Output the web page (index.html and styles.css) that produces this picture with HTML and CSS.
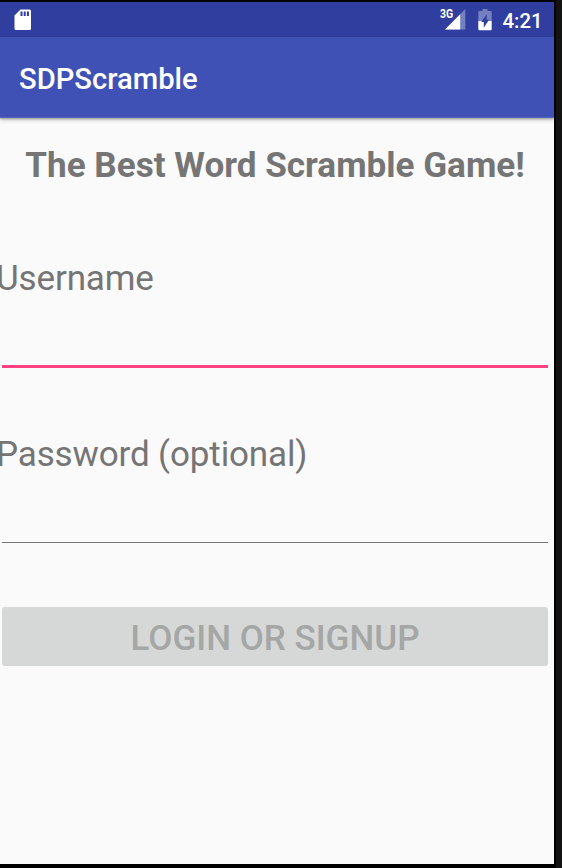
FILE: index.html
```
<!DOCTYPE html>
<html lang="en">
<head>
<meta charset="utf-8">
<title>SDPScramble</title>
<link rel="stylesheet" href="styles.css">
</head>
<body>
<main class="screen">
  <div class="status-bar">
    <svg class="sd-icon" viewBox="0 0 18 22" aria-hidden="true">
      <path fill="#fff" d="M6.5 0.5H15.5Q17 0.5 17 2V19.5Q17 21 15.5 21H2Q0.5 21 0.5 19.5V6.5Z"/>
      <path fill="#303f9f" d="M6.5 2.5h2v4.5h-2zM9.7 2.5h2v4.5h-2zM12.9 2.5h2v4.5h-2z"/>
    </svg>
    <div class="signal">
      <span class="network">3G</span>
      <svg class="signal-icon" viewBox="0 0 21 21" aria-hidden="true">
        <path fill="#7580c0" d="M20.3 0V20.6H0Z"/>
        <path fill="#fff" d="M15.2 5.2V20.6H0Z"/>
      </svg>
    </div>
    <svg class="battery-icon" viewBox="0 0 14 22" aria-hidden="true">
      <path fill="#7580c0" d="M4.5 0h5v2h3.2q1 0 1 1V12H0.3V3q0-1 1-1h3.2z"/>
      <path fill="#fff" d="M0.3 12H13.7V20.2q0 1-1 1H1.3q-1 0-1-1z"/>
      <path fill="#303f9f" d="M8.7 5.2V10.8H11L5.8 18.8V13H3.2Z"/>
    </svg>
    <span class="clock">4:21</span>
  </div>
  <header class="app-bar"><h1>SDPScramble</h1></header>
  <form class="content">
    <h2>The Best Word Scramble Game!</h2>
    <label class="field">
      <span class="label">Username</span>
      <input class="focused" type="text">
    </label>
    <label class="field">
      <span class="label">Password (optional)</span>
      <input type="password">
    </label>
    <button type="button" disabled>LOGIN OR SIGNUP</button>
  </form>
</main>
</body>
</html>
```

FILE: styles.css
```
* {
  box-sizing: border-box;
}

body {
  margin: 0;
  height: 868px;
  overflow: hidden;
  padding: 2px 8px 4px 0;
  background: linear-gradient(90deg, #000 556px, #131313 556px);
  font-family: Roboto, sans-serif;
}

.screen {
  width: 554px;
  height: 862px;
  overflow: hidden;
  background: #fafafa;
}

.status-bar {
  display: flex;
  height: 35px;
  padding: 7px 12px 0 13.5px;
  background: #303f9f;
  color: #fff;
}

.sd-icon {
  width: 18px;
  height: 22px;
}

.signal {
  display: flex;
  margin-left: auto;
}

.network {
  margin-right: -8px;
  font-size: 12px;
  font-weight: 700;
  line-height: 11px;
  transform: scaleX(.87);
  transform-origin: right;
  z-index: 1;
}

.signal-icon {
  width: 21px;
  height: 21px;
}

.battery-icon {
  width: 14px;
  height: 22px;
  margin-left: 12px;
}

.clock {
  margin-left: 10px;
  margin-right: -0.6px;
  font-size: 20.4px;
  font-weight: 500;
  line-height: 24px;
}

.app-bar {
  display: flex;
  align-items: center;
  height: 81px;
  padding-left: 19px;
  border-bottom: 1px solid #5565bd;
  background: #3f51b5;
  box-shadow: 0 1px 2px rgba(0, 0, 0, .25), 0 2px 4px rgba(0, 0, 0, .2);
  color: #fff;
}

h1 {
  margin: 4px 0 0;
  font-size: 29.2px;
  font-weight: 500;
  line-height: 34px;
}

.content {
  display: flex;
  flex-direction: column;
  color: #757575;
}

h2 {
  margin: 27px 0 72px -4px;
  font-size: 35.1px;
  font-weight: 700;
  line-height: 41px;
  text-align: center;
  white-space: nowrap;
}

.field {
  display: flex;
  flex-direction: column;
  height: 176px;
}

.label {
  margin-left: -4px;
  font-size: 35px;
  letter-spacing: -0.13px;
  line-height: 41px;
}

input {
  width: 546px;
  height: 68px;
  margin: 0 0 0 2px;
  padding: 0;
  border: 0;
  border-radius: 0;
  border-bottom: 1px solid #757575;
  background: transparent;
  outline: 0;
}

.focused {
  height: 69px;
  border-bottom: 3px solid #ff4081;
}

button {
  width: 546px;
  height: 59px;
  margin: -3px 0 0 2px;
  padding: 3px 0 0;
  border: 0;
  border-radius: 3px;
  background: #d6d8d7;
  color: #a5a7a6;
  font: 500 35px/41px Roboto, sans-serif;
}
```
